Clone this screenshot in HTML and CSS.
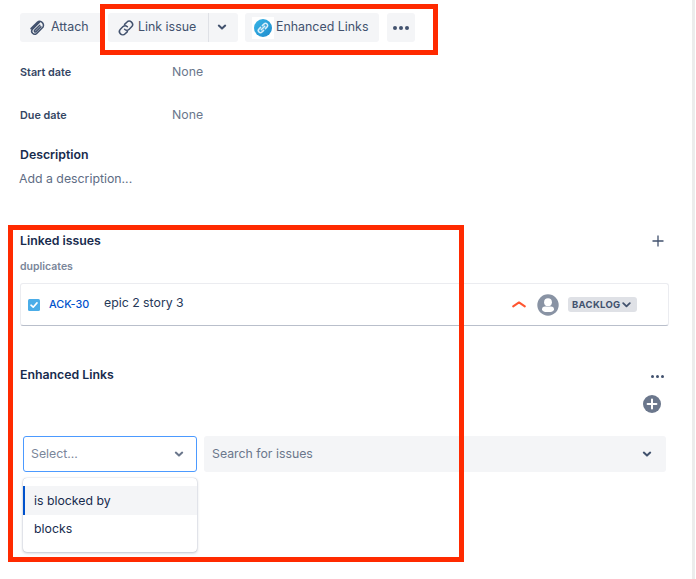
FILE: index.html
```html
<!DOCTYPE html>
<html lang="en">
<head>
<meta charset="utf-8">
<title>Issue</title>
<link rel="stylesheet" href="styles.css">
</head>
<body>
<main class="panel">
  <div class="toolbar">
    <button class="btn btn-attach">
      <svg width="18" height="18" viewBox="0 0 18 18" fill="none" stroke="#42526e" stroke-width="1.5" stroke-linecap="round" stroke-linejoin="round"><path d="M11.5 3.2 4.3 10.4a3 3 0 0 0 4.2 4.2l6.6-6.6a4.4 4.4 0 0 0-1.6-5.2 3.6 3.6 0 0 0-4.2.6L3 9.6"/><path d="M11.8 6.2 6.6 11.4a.9.9 0 0 0 1.3 1.3l5-5"/></svg>
      <span class="btn-text">Attach</span>
    </button>
    <div class="split">
      <button class="btn btn-link">
        <svg width="18" height="18" viewBox="0 0 18 18" fill="none" stroke="#42526e" stroke-width="1.5" stroke-linecap="round"><path d="M7.6 5.4 9.8 3.2a3.3 3.3 0 0 1 4.8 4.6l-2.4 2.4a3.3 3.3 0 0 1-4.6 0"/><path d="M10.4 12.6l-2.2 2.2a3.3 3.3 0 0 1-4.8-4.6l2.4-2.4a3.3 3.3 0 0 1 4.6 0"/></svg>
        <span class="btn-text">Link issue</span>
      </button>
      <button class="btn btn-caret">
        <svg width="10" height="7" viewBox="0 0 10 7" fill="none" stroke="#42526e" stroke-width="2" stroke-linecap="round" stroke-linejoin="round"><path d="M1.8 1.6 5 4.6l3.2-3"/></svg>
      </button>
    </div>
    <button class="btn btn-enh">
      <span class="logo">
        <svg width="18" height="18" viewBox="0 0 18 18"><defs><linearGradient id="g" x1="0" y1="0" x2="1" y2="1"><stop offset="0" stop-color="#37b4e6"/><stop offset="1" stop-color="#1f8ccd"/></linearGradient></defs><circle cx="9" cy="9" r="9" fill="url(#g)"/><g fill="none" stroke="#d8eef9" stroke-width="1.6" stroke-linecap="round"><path d="M8.4 6.6 10 5a2.1 2.1 0 0 1 3 3l-1.6 1.6"/><path d="M9.6 11.4 8 13a2.1 2.1 0 0 1-3-3l1.6-1.6"/><path d="M7.2 10.8l3.6-3.6"/></g></svg>
      </span>
      <span class="btn-text">Enhanced Links</span>
    </button>
    <button class="btn btn-more" aria-label="More"><i class="dot"></i><i class="dot"></i><i class="dot"></i></button>
  </div>

  <div class="field field-start"><span class="field-label">Start date</span><span class="field-value">None</span></div>
  <div class="field field-due"><span class="field-label">Due date</span><span class="field-value">None</span></div>

  <h2 class="heading desc-heading">Description</h2>
  <p class="desc-text">Add a description...</p>

  <div class="section-head linked-head">
    <h2 class="heading">Linked issues</h2>
    <svg class="plus" width="12" height="12" viewBox="0 0 12 12" fill="none" stroke="#42526e" stroke-width="1.3"><path d="M6 .5v11M.5 6h11"/></svg>
  </div>
  <div class="rel-label">duplicates</div>

  <div class="issue-card">
    <svg class="check" width="12" height="12" viewBox="0 0 12 12"><rect width="12" height="12" rx="1.5" fill="#4bade8"/><path d="M3 6.2 5.2 8.2 9 3.9" fill="none" stroke="#fff" stroke-width="1.6" stroke-linecap="round" stroke-linejoin="round"/></svg>
    <a class="issue-key">ACK-30</a>
    <span class="issue-title">epic 2 story 3</span>
    <svg class="prio" width="14" height="7" viewBox="0 0 14 7" fill="none" stroke="#ff5630" stroke-width="2" stroke-linecap="round" stroke-linejoin="round"><path d="M1.2 5.4 7 1.4l5.8 4"/></svg>
    <svg class="avatar" width="22" height="22" viewBox="0 0 22 22"><circle cx="11" cy="11" r="10.7" fill="#8993a4"/><circle cx="11" cy="8.2" r="3.9" fill="#fff"/><path d="M5 15.4a3 3 0 0 1 3-3h6a3 3 0 0 1 3 3v.6a5 5 0 0 1-3 2h-6a5 5 0 0 1-3-2z" fill="#fff"/></svg>
    <span class="status">BACKLOG<svg width="9" height="6" viewBox="0 0 9 6" fill="none" stroke="#42526e" stroke-width="1.8" stroke-linecap="round" stroke-linejoin="round"><path d="M1.2 1.2 4.5 4.4l3.3-3.2"/></svg></span>
  </div>

  <div class="section-head enh-head">
    <h2 class="heading">Enhanced Links</h2>
    <span class="mini-more"><i class="mini-dot"></i><i class="mini-dot"></i><i class="mini-dot"></i></span>
  </div>
  <div class="add-row">
    <svg width="18" height="18" viewBox="0 0 18 18"><circle cx="9" cy="9" r="9" fill="#6b778c"/><path d="M9 4.6v8.8M4.6 9h8.8" stroke="#fff" stroke-width="2" stroke-linecap="round"/></svg>
  </div>

  <div class="pickers">
    <div class="select">
      <span class="picker-text">Select...</span>
      <svg width="10" height="7" viewBox="0 0 10 7" fill="none" stroke="#6b778c" stroke-width="2" stroke-linecap="round" stroke-linejoin="round"><path d="M1.8 1.6 5 4.6l3.2-3"/></svg>
    </div>
    <div class="search">
      <span class="picker-text">Search for issues</span>
      <svg width="10" height="7" viewBox="0 0 10 7" fill="none" stroke="#42526e" stroke-width="2" stroke-linecap="round" stroke-linejoin="round"><path d="M1.8 1.6 5 4.6l3.2-3"/></svg>
    </div>
  </div>

  <ul class="menu">
    <li class="menu-item is-active">is blocked by</li>
    <li class="menu-item">blocks</li>
  </ul>
</main>

<div class="mark mark-top"></div>
<div class="mark mark-main"></div>
<div class="scroll-edge"></div>
</body>
</html>
```
FILE: styles.css
```css
* { box-sizing: border-box; }
html, body { margin: 0; height: 579px; overflow: hidden; background: #fff; }
body { font-family: Inter, "Noto Sans", sans-serif; color: #172b4d; position: relative; }

.panel { width: 669px; padding: 13px 0 0 20px; margin-right: 27px; }

.toolbar { display: flex; height: 29px; }
.btn { display: flex; align-items: center; height: 29px; border: 0; padding: 0; background: #f4f5f7; border-radius: 3px; font: 400 12.4px Inter, sans-serif; color: #42526e; }
.btn-text { margin-top: -2px; }
.btn-attach { width: 80px; padding-left: 8px; gap: 5px; border-radius: 3px 0 0 3px; }
.split { display: flex; margin-left: 8px; }
.btn-link { width: 101px; padding-left: 9px; gap: 3px; border-right: 1px solid #dfe1e6; border-radius: 3px 0 0 3px; }
.btn-caret { width: 29px; justify-content: center; padding-right: 3px; border-radius: 0 3px 3px 0; }
.btn-enh { width: 134px; margin-left: 7px; gap: 2px; padding-left: 7px; }
.logo { display: flex; align-items: center; justify-content: center; width: 22px; height: 22px; background: #fff; }
.btn-more { width: 28px; margin-left: 8px; justify-content: center; gap: 2px; padding-top: 1px; }
.dot { width: 4px; height: 4px; border-radius: 50%; background: #42526e; }

.field { display: flex; align-items: center; height: 16px; }
.field-start { margin-top: 22px; }
.field-due { margin-top: 27px; }
.field-label { width: 152px; font-size: 10.8px; font-weight: 600; color: #344563; }
.field-value { font-size: 12.3px; color: #6b778c; margin-top: -1px; }

.heading { margin: 0; font-size: 12.3px; line-height: 16px; font-weight: 600; color: #172b4d; }
.desc-heading { margin-top: 24px; }
.desc-text { margin: 8px 0 0 -1px; font-size: 12.3px; line-height: 16px; color: #5e6c84; }

.section-head { display: flex; justify-content: space-between; align-items: center; height: 16px; }
.linked-head { margin-top: 46px; padding-right: 5px; }
.rel-label { margin-top: 10px; font-size: 10.5px; line-height: 16px; font-weight: 600; color: #7a869a; }

.issue-card { display: flex; align-items: center; height: 43px; margin-top: 8px; padding: 0 0 0 7px; border: 1px solid #ebecf0; border-bottom-color: #b9bfcb; border-radius: 3px; }
.check { flex: none; }
.issue-key { width: 55px; margin-left: 9px; font-size: 10.8px; font-weight: 500; color: #0052cc; }
.issue-title { flex: 1; font-size: 12.3px; color: #253858; margin-top: -4px; }
.prio { margin-right: 11px; margin-top: -1px; }
.avatar { margin-right: 9px; }
.status { display: flex; align-items: center; gap: 1px; height: 15px; width: 69px; padding-left: 4px; margin-right: 31px; background: #dfe1e6; border-radius: 3px; font-size: 9.5px; font-weight: 700; letter-spacing: .3px; color: #42526e; }

.enh-head { margin-top: 41px; padding-right: 5px; }
.mini-more { display: flex; gap: 2px; padding-top: 2px; }
.mini-dot { width: 3px; height: 3px; border-radius: 50%; background: #42526e; }
.add-row { display: flex; justify-content: flex-end; padding-right: 8px; margin-top: 12px; }

.pickers { display: flex; gap: 7px; margin: 23px 3px 0 3px; height: 36px; }
.select, .search { display: flex; align-items: center; justify-content: space-between; font-size: 12.3px; border-radius: 3px; }
.picker-text { margin-top: -2px; }
.select { width: 174px; padding: 0 12px 0 7px; border: 1px solid #4c9aff; color: #7a869a; }
.search { flex: 1; padding: 0 14px 0 8px; background: #f4f5f7; color: #6b778c; }

.menu { list-style: none; width: 174px; height: 74px; margin: 6px 0 0 3px; padding: 8px 0 0; background: #fff; border-radius: 4px; box-shadow: 0 1px 3px rgba(9,30,66,.25), 0 0 1px rgba(9,30,66,.31); }
.menu-item { display: flex; align-items: center; height: 29px; padding-left: 11px; font-size: 12.3px; color: #172b4d; }
.is-active { background: #f4f5f7; border-left: 2px solid #0052cc; padding-left: 9px; }
.menu-item + .menu-item { height: 27px; }

.mark { position: absolute; border: 5px solid #ff2a00; pointer-events: none; }
.mark-top { left: 100px; top: 4px; width: 338px; height: 51px; }
.mark-main { left: 8px; top: 225px; width: 456px; height: 337px; }
.scroll-edge { position: absolute; right: 1px; top: 0; bottom: 0; width: 3px; background: #ececec; }
```
